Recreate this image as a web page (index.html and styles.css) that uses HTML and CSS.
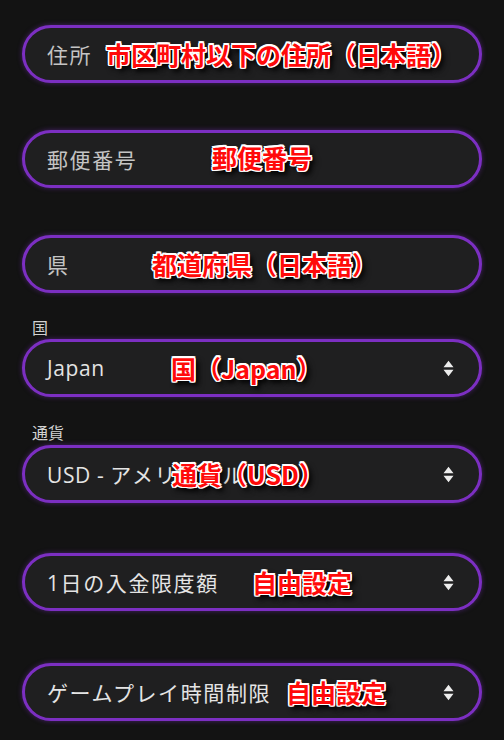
FILE: index.html
```html
<!DOCTYPE html>
<html lang="ja">
<head>
<meta charset="utf-8">
<title>登録フォーム</title>
<link rel="stylesheet" href="styles.css">
</head>
<body>
<div class="form">
  <div class="group">
    <div class="field">
      <span class="value placeholder">住所</span>
      <span class="note note-address">市区町村以下の住所（日本語）</span>
    </div>
  </div>

  <div class="group gap">
    <div class="field">
      <span class="value placeholder">郵便番号</span>
      <span class="note note-zip">郵便番号</span>
    </div>
  </div>

  <div class="group gap">
    <div class="field">
      <span class="value placeholder">県</span>
      <span class="note note-pref">都道府県（日本語）</span>
    </div>
  </div>

  <div class="group">
    <div class="label label-country">国</div>
    <div class="field select">
      <span class="value latin">Japan</span>
      <span class="note note-country">国（Japan）</span>
      <svg class="arrows" width="11" height="17" viewBox="0 0 11 17"><path d="M0.5 7.2 L5.5 0.8 L10.5 7.2 Z M0.5 9.8 L5.5 16.2 L10.5 9.8 Z" fill="#ececec"/></svg>
    </div>
  </div>

  <div class="group">
    <div class="label label-currency">通貨</div>
    <div class="field select">
      <span class="value"><span class="latin">USD - </span>アメリカドル</span>
      <span class="note note-currency">通貨（USD）</span>
      <svg class="arrows" width="11" height="17" viewBox="0 0 11 17"><path d="M0.5 7.2 L5.5 0.8 L10.5 7.2 Z M0.5 9.8 L5.5 16.2 L10.5 9.8 Z" fill="#ececec"/></svg>
    </div>
  </div>

  <div class="group gap-md">
    <div class="field select">
      <span class="value">1日の入金限度額</span>
      <span class="note note-deposit">自由設定</span>
      <svg class="arrows" width="11" height="17" viewBox="0 0 11 17"><path d="M0.5 7.2 L5.5 0.8 L10.5 7.2 Z M0.5 9.8 L5.5 16.2 L10.5 9.8 Z" fill="#ececec"/></svg>
    </div>
  </div>

  <div class="group gap-lg">
    <div class="field select">
      <span class="value">ゲームプレイ時間制限</span>
      <span class="note note-time">自由設定</span>
      <svg class="arrows" width="11" height="17" viewBox="0 0 11 17"><path d="M0.5 7.2 L5.5 0.8 L10.5 7.2 Z M0.5 9.8 L5.5 16.2 L10.5 9.8 Z" fill="#ececec"/></svg>
    </div>
  </div>
</div>
</body>
</html>
```

FILE: styles.css
```css
html, body {
  margin: 0;
  padding: 0;
  background: #131313;
}

body {
  width: 504px;
  height: 740px;
  overflow: hidden;
  font-family: "Open Sans", "Noto Sans CJK JP", sans-serif;
}

.form {
  display: flex;
  flex-direction: column;
  padding: 25px 22px 0 22px;
}

.group {
  display: flex;
  flex-direction: column;
}

.gap { margin-top: 47px; }
.gap-md { margin-top: 50px; }
.gap-lg { margin-top: 52px; }

.label {
  font-family: "Noto Sans CJK JP", sans-serif;
  font-size: 16px;
  line-height: 20px;
  color: #d2d2d2;
  padding-left: 10px;
}

.label-country { margin-top: 24px; margin-bottom: 2px; }
.label-currency { margin-top: 25px; margin-bottom: 3px; }

.field {
  position: relative;
  box-sizing: border-box;
  height: 58px;
  border: 3px solid #7c2fc2;
  border-radius: 29px;
  background: #1f1f20;
  box-shadow: 0 0 5px rgba(124, 47, 194, 0.5);
  display: flex;
  align-items: center;
  padding: 0 25px 0 22px;
}

.value {
  font-family: "Open Sans", "Noto Sans CJK JP", sans-serif;
  font-size: 21px;
  letter-spacing: 1.6px;
  color: #e4e4e4;
  white-space: nowrap;
}

.latin {
  letter-spacing: 0.6px;
}

.placeholder {
  color: #c4c4c4;
}

.arrows {
  margin-left: auto;
  display: block;
  flex-shrink: 0;
}

.note {
  position: absolute;
  top: 50%;
  transform: translateY(-50%);
  font-family: "Noto Sans CJK JP", sans-serif;
  font-weight: 700;
  font-size: 25px;
  line-height: 1;
  color: #ff0a0a;
  white-space: nowrap;
  text-shadow:
    -1.2px -1.2px 0 #fff,
    1.2px -1.2px 0 #fff,
    -1.2px 1.2px 0 #fff,
    1.2px 1.2px 0 #fff,
    0 -1.5px 0 #fff,
    0 1.5px 0 #fff,
    -1.5px 0 0 #fff,
    1.5px 0 0 #fff,
    3px 3px 4px rgba(0, 0, 0, 0.95),
    4px 4px 6px rgba(0, 0, 0, 0.7);
}

.note-address { left: 81px; }
.note-zip { left: 187px; margin-top: -2px; }
.note-pref { left: 127px; }
.note-country { left: 146px; }
.note-currency { left: 147px; }
.note-deposit { left: 227px; }
.note-time { left: 261px; }
```
